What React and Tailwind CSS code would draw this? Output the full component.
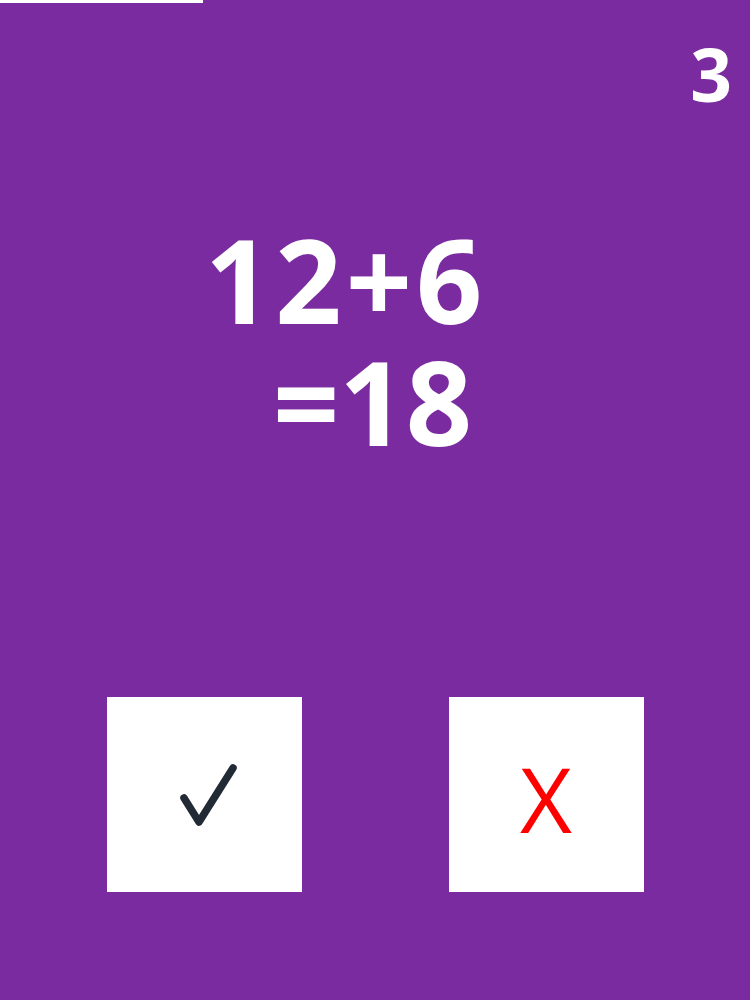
import React from "react";

export default function App() {
  return (
    <div
      className="w-[750px] h-[1000px] bg-[#7b2ba0] flex flex-col overflow-hidden"
      style={{ fontFamily: '"Open Sans", "Noto Sans", sans-serif' }}
    >
      <div className="h-[3px] w-[203px] bg-white" />
      <div className="flex justify-end pr-[18px] mt-[34px]">
        <span className="text-white font-bold text-[73px] leading-none">3</span>
      </div>
      <div className="mt-[108px] text-white font-bold text-[116px] leading-[122px]">
        <div className="pl-[205px] tracking-[4px]">12+6</div>
        <div className="pl-[273px]">=18</div>
      </div>
      <div className="mt-[235px] flex justify-center gap-[147px]">
        <button className="w-[195px] h-[195px] bg-white flex items-center justify-center">
          <svg width="70" height="70" viewBox="0 0 70 70" className="mt-[4px]">
            <polyline
              points="15,36 30,60 64,6"
              fill="none"
              stroke="#222a35"
              strokeWidth="7.5"
              strokeLinecap="round"
              strokeLinejoin="round"
            />
          </svg>
        </button>
        <button className="w-[195px] h-[195px] bg-white flex items-center justify-center">
          <span className="text-[#ff0000] text-[90px] leading-none pt-[6px]">X</span>
        </button>
      </div>
    </div>
  );
}
